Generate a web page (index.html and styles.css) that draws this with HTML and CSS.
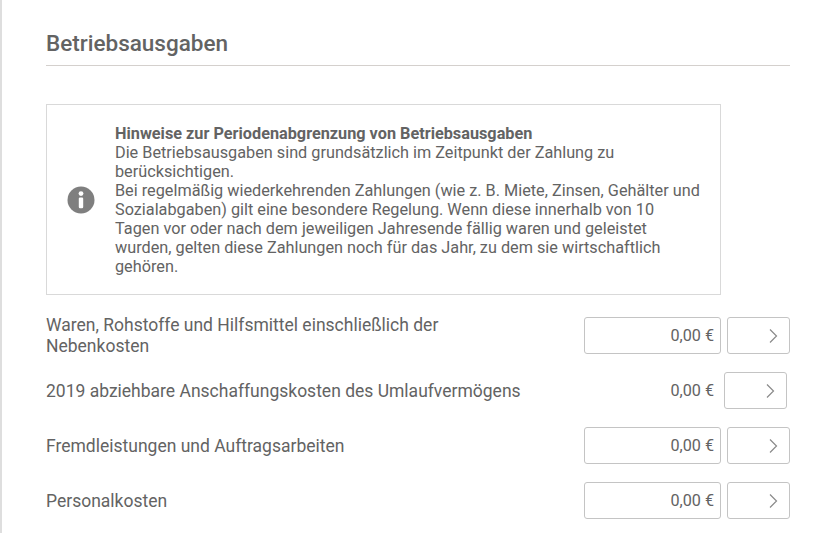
FILE: index.html
```html
<!DOCTYPE html>
<html lang="de">
<head>
  <meta charset="UTF-8">
  <meta name="viewport" content="width=device-width, initial-scale=1.0">
  <title>Betriebsausgaben</title>
  <link rel="stylesheet" href="styles.css">
</head>
<body>
  <main class="inhalt">
    <h2 class="titel">Betriebsausgaben</h2>

    <div class="hinweis">
      <div class="hinweis-icon">
        <svg width="28" height="28" viewBox="0 0 28 28">
          <circle cx="14" cy="14" r="13.5" fill="#7f7f7f"/>
          <circle cx="14" cy="7.6" r="2.4" fill="#fff"/>
          <rect x="11.8" y="11.6" width="4.4" height="10.6" rx="1.2" fill="#fff"/>
        </svg>
      </div>
      <p class="hinweis-text">
        <strong>Hinweise zur Periodenabgrenzung von Betriebsausgaben</strong><br>
        Die Betriebsausgaben sind grundsätzlich im Zeitpunkt der Zahlung zu berücksichtigen.<br>
        Bei regelmäßig wiederkehrenden Zahlungen (wie z. B. Miete, Zinsen, Gehälter und Sozialabgaben) gilt eine besondere Regelung. Wenn diese innerhalb von 10 Tagen vor oder nach dem jeweiligen Jahresende fällig waren und geleistet wurden, gelten diese Zahlungen noch für das Jahr, zu dem sie wirtschaftlich gehören.
      </p>
    </div>

    <div class="zeile">
      <label class="bezeichnung bezeichnung-lang">Waren, Rohstoffe und Hilfsmittel einschließlich der Nebenkosten</label>
      <div class="betrag">0,00 €</div>
      <button class="weiter" aria-label="Weiter">
        <svg width="9" height="14" viewBox="0 0 9 14"><path d="M1 .5L7.5 7 1 13.5" fill="none" stroke="#8a8a8a" stroke-width="1.2"/></svg>
      </button>
    </div>

    <div class="zeile zeile-berechnet">
      <label class="bezeichnung">2019 abziehbare Anschaffungskosten des Umlaufvermögens</label>
      <div class="betrag betrag-text">0,00 €</div>
      <button class="weiter" aria-label="Weiter">
        <svg width="9" height="14" viewBox="0 0 9 14"><path d="M1 .5L7.5 7 1 13.5" fill="none" stroke="#8a8a8a" stroke-width="1.2"/></svg>
      </button>
    </div>

    <div class="zeile">
      <label class="bezeichnung">Fremdleistungen und Auftragsarbeiten</label>
      <div class="betrag">0,00 €</div>
      <button class="weiter" aria-label="Weiter">
        <svg width="9" height="14" viewBox="0 0 9 14"><path d="M1 .5L7.5 7 1 13.5" fill="none" stroke="#8a8a8a" stroke-width="1.2"/></svg>
      </button>
    </div>

    <div class="zeile">
      <label class="bezeichnung">Personalkosten</label>
      <div class="betrag">0,00 €</div>
      <button class="weiter" aria-label="Weiter">
        <svg width="9" height="14" viewBox="0 0 9 14"><path d="M1 .5L7.5 7 1 13.5" fill="none" stroke="#8a8a8a" stroke-width="1.2"/></svg>
      </button>
    </div>
  </main>
</body>
</html>
```

FILE: styles.css
```css
* {
  margin: 0;
  padding: 0;
  box-sizing: border-box;
}

html, body {
  height: 100%;
  overflow: hidden;
}

body {
  background: #fff;
  color: #636363;
  font-family: Roboto, "Open Sans", sans-serif;
  font-size: 16px;
}

.inhalt {
  height: 100%;
  padding: 29px 35px 0 44px;
  border-left: 2px solid #dedede;
}

.titel {
  height: 37px;
  font-size: 22.5px;
  line-height: 28px;
  font-weight: 500;
  border-bottom: 1px solid #d4d0cd;
}

/* Hinweisbox */
.hinweis {
  display: flex;
  align-items: center;
  width: 675px;
  height: 191px;
  margin-top: 38px;
  padding: 0 19px 0 20px;
  border: 1px solid #d9d9d9;
}

.hinweis-icon {
  display: flex;
  flex: 0 0 48px;
}

.hinweis-text {
  font-size: 16.25px;
  line-height: 19px;
}

.hinweis-text strong {
  font-weight: 700;
}

/* Zeilen mit Betrag */
.zeile {
  display: flex;
  align-items: center;
  height: 37px;
  margin-top: 18px;
}

.hinweis + .zeile {
  margin-top: 22px;
}

.bezeichnung {
  width: 538px;
  padding-top: 2px;
  padding-right: 53px;
  font-size: 17.5px;
  line-height: 21px;
}

.bezeichnung-lang {
  padding-top: 0;
}

.betrag {
  width: 137px;
  height: 37px;
  padding-right: 6px;
  border: 1px solid #c4c4c4;
  border-radius: 3px;
  text-align: right;
  font-size: 16.2px;
  line-height: 35px;
}

.betrag-text {
  border-color: transparent;
}

.weiter {
  display: flex;
  align-items: center;
  justify-content: flex-end;
  width: 63px;
  height: 37px;
  margin-left: 6px;
  padding-right: 11px;
  background: #fff;
  border: 1px solid #c4c4c4;
  border-radius: 3px;
}

.zeile-berechnet .weiter {
  margin-left: 3px;
}
```
